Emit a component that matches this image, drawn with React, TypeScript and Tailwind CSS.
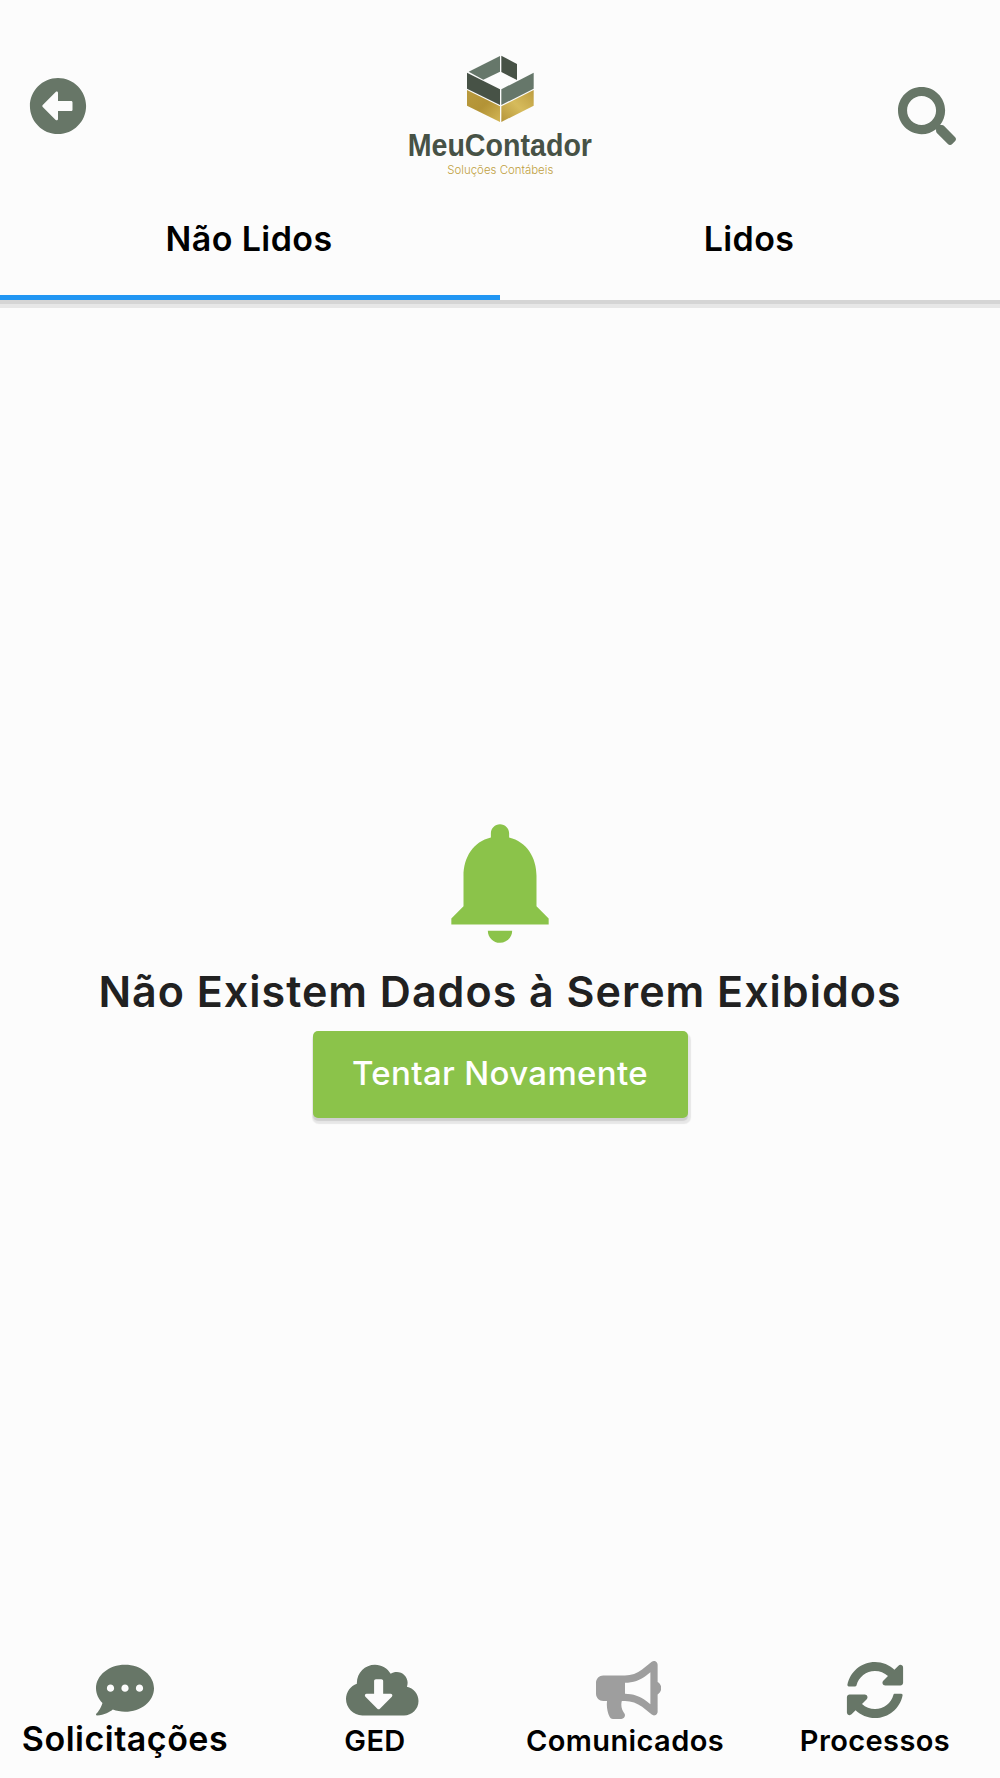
import type { IconType } from 'react-icons'
import {
  FaArrowAltCircleLeft,
  FaBullhorn,
  FaCloudDownloadAlt,
  FaCommentDots,
  FaSearch,
  FaSyncAlt
} from 'react-icons/fa'

type NavItem = {
  label: string
  icon: IconType
  iconClass: string
  labelClass: string
}

const NAV: NavItem[] = [
  {
    label: 'Solicitações',
    icon: FaCommentDots,
    iconClass: 'w-[58px] text-[#677667]',
    labelClass: 'text-[34px] tracking-[0.5px]'
  },
  {
    label: 'GED',
    icon: FaCloudDownloadAlt,
    iconClass: 'w-[72.5px] text-[#677667]',
    labelClass: 'text-[29px] tracking-[0.35px] pt-[2px]'
  },
  {
    label: 'Comunicados',
    icon: FaBullhorn,
    iconClass: 'w-[65.25px] text-[#9e9e9e]',
    labelClass: 'text-[29px] tracking-[0.4px] pt-[2px]'
  },
  {
    label: 'Processos',
    icon: FaSyncAlt,
    iconClass: 'w-[58px] text-[#677667]',
    labelClass: 'text-[29px] tracking-[0.4px] pt-[2px]'
  }
]

export default function App() {
  return (
    <div className="flex h-[1778px] w-[1000px] flex-col overflow-hidden bg-[#fcfcfc] font-['Inter',sans-serif]">
      <Header />
      <EmptyState />
      <BottomNav />
    </div>
  )
}

function Header() {
  return (
    <header className="h-[300px] shrink-0 shadow-[0_4px_0_#d5d5d5,0_8px_0_#e7e7e7]">
      <div className="flex h-[195px] items-start justify-between pr-[44px] pl-[29px]">
        <button aria-label="Voltar" className="mt-[77px] text-[#677667]">
          <FaArrowAltCircleLeft className="h-[58px] w-[58px]" />
        </button>
        <Logo />
        <button aria-label="Buscar" className="mt-[87px] text-[#677667]">
          <FaSearch className="h-[58px] w-[58px]" />
        </button>
      </div>
      <div className="flex h-[105px] text-[34px] font-semibold text-black">
        <Tab label="Não Lidos" active />
        <Tab label="Lidos" />
      </div>
    </header>
  )
}

function Tab({ label, active = false }: { label: string; active?: boolean }) {
  return (
    <button
      className={`flex flex-1 justify-center border-b-[5px] pt-[24px] pr-[2px] leading-[40px] tracking-[0.4px] ${
        active ? 'border-[#2196f3]' : 'border-transparent'
      }`}
    >
      {label}
    </button>
  )
}

function Logo() {
  return (
    <svg className="mt-[45px] ml-[15px] h-[140px] w-[200px] overflow-visible" viewBox="0 0 600 420">
      <defs>
        <linearGradient id="goldLeft" x1="0" y1="0" x2="1" y2="1">
          <stop offset="0" stopColor="#b99a3e" />
          <stop offset="0.5" stopColor="#b39336" />
          <stop offset="1" stopColor="#d3b655" />
        </linearGradient>
        <linearGradient id="goldRight" x1="0" y1="1" x2="1" y2="0">
          <stop offset="0" stopColor="#b5953a" />
          <stop offset="0.5" stopColor="#d6bb5c" />
          <stop offset="1" stopColor="#bd9d40" />
        </linearGradient>
      </defs>
      <polygon points="206,80 300,33 300,80 250,104" fill="#66776a" />
      <polygon points="304,32 351,57 351,105 304,81" fill="#475246" />
      <polygon points="201,83 300,133 300,180 201,131" fill="#475246" />
      <polygon points="304,133 401,83 401,131 304,180" fill="#66776a" />
      <polygon points="201,135 300,184 300,231 201,182" fill="url(#goldLeft)" />
      <polygon points="304,184 401,135 401,182 304,231" fill="url(#goldRight)" />
      <text
        x="23"
        y="333"
        textLength="553"
        lengthAdjust="spacingAndGlyphs"
        fill="#475246"
        className="font-['Liberation_Sans',sans-serif] text-[94px] font-bold"
      >
        MeuContador
      </text>
      <text
        x="142"
        y="387"
        textLength="318"
        lengthAdjust="spacingAndGlyphs"
        fill="#bf9f40"
        className="font-['Inter',sans-serif] text-[36px] font-light"
      >
        Soluções Contábeis
      </text>
    </svg>
  )
}

function EmptyState() {
  return (
    <main className="flex flex-1 flex-col items-center pt-[508.5px]">
      <svg viewBox="0 0 24 24" className="h-[146px] w-[146px] shrink-0 fill-[#8bc34a]">
        <path d="M12 22c1.1 0 2-.9 2-2h-4c0 1.1.89 2 2 2zm6-6v-5c0-3.07-1.64-5.64-4.5-6.32V4c0-.83-.67-1.5-1.5-1.5s-1.5.67-1.5 1.5v.68C7.63 5.36 6 7.92 6 11v5l-2 2v1h16v-1l-2-2z" />
      </svg>
      <h1 className="mt-[11.5px] text-[43px] leading-[50px] font-semibold tracking-[1px] whitespace-nowrap text-[#212121]">
        Não Existem Dados à Serem Exibidos
      </h1>
      <button className="mt-[15px] h-[87px] w-[375px] rounded-[5px] bg-[#8bc34a] pb-px text-[33px] font-medium tracking-[0.35px] text-white shadow-[0_3px_1px_#cfcfcf,1px_4px_1px_2px_#e7e7e7]">
        Tentar Novamente
      </button>
    </main>
  )
}

function BottomNav() {
  return (
    <nav className="flex h-[117px] shrink-0">
      {NAV.map(({ label, icon: Icon, iconClass, labelClass }) => (
        <button key={label} className="flex w-[250px] flex-col items-center text-black">
          {/* wide glyphs spill to the right of the 58px box */}
          <span className="flex h-[58px] w-[58px] shrink-0">
            <Icon className={`h-[58px] max-w-none shrink-0 ${iconClass}`} />
          </span>
          <span className={`leading-[40px] font-semibold ${labelClass}`}>{label}</span>
        </button>
      ))}
    </nav>
  )
}
